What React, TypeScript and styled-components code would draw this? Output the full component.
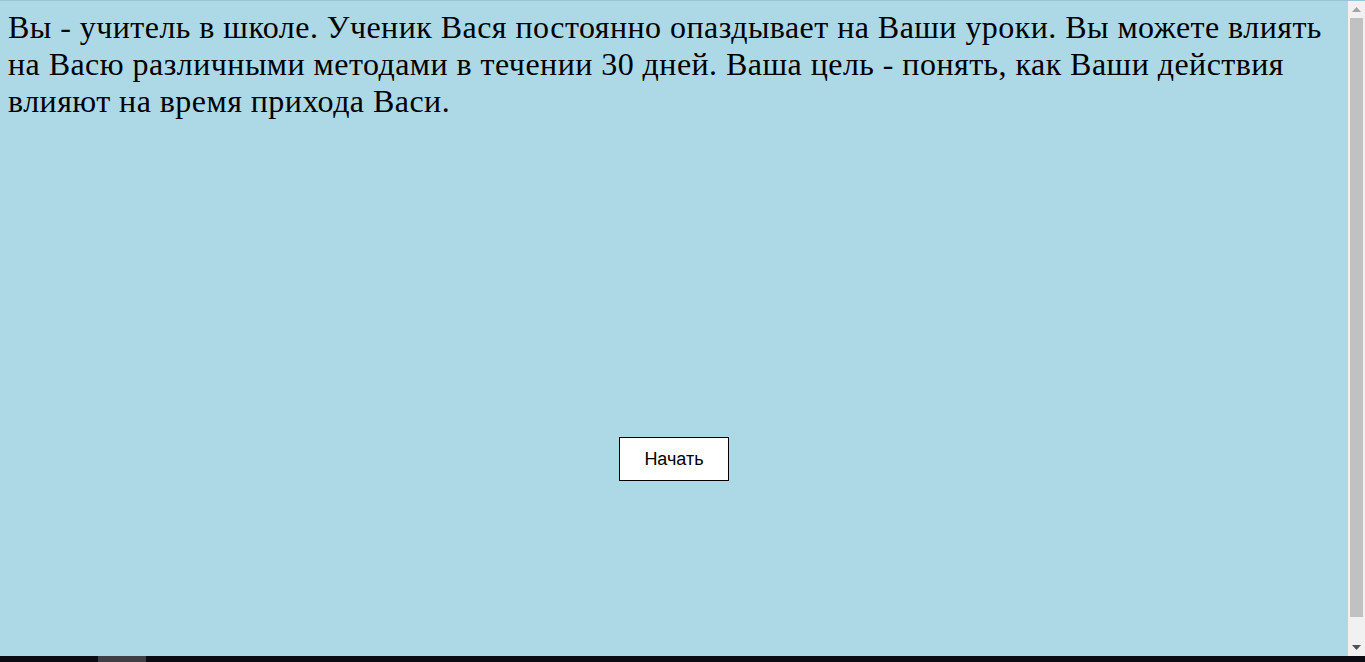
import styled, { createGlobalStyle } from 'styled-components';

const GlobalStyle = createGlobalStyle`
  html, body {
    margin: 0;
    padding: 0;
    height: 100%;
    overflow: hidden;
  }
  #root {
    height: 100%;
  }
`;

const Screen = styled.div`
  height: 100%;
  display: flex;
  flex-direction: column;
  background: #0b0b14;
`;

const Window = styled.div`
  flex: 1;
  display: flex;
  min-height: 0;
  border-top: 1px solid #9cc6d6;
`;

const Page = styled.main`
  flex: 1;
  background-color: lightblue;
  padding: 8px 8px 8px;
  display: flex;
  flex-direction: column;
`;

const Intro = styled.div`
  font-family: "Liberation Serif", "Times New Roman", serif;
  font-size: 32px;
  letter-spacing: 0.45px;
  line-height: 37px;
  color: #000;
`;

const StartButton = styled.button`
  align-self: center;
  margin-top: 317px;
  width: 110px;
  height: 44px;
  background: #fff;
  border: 1px solid #000;
  font-family: "Liberation Sans", Arial, sans-serif;
  font-size: 18px;
  color: #000;
  cursor: pointer;
`;

const ScrollBar = styled.div`
  width: 17px;
  background: #f1f1f1;
  display: flex;
  flex-direction: column;
  align-items: center;
`;

const Arrow = styled.div`
  height: 17px;
  width: 17px;
  display: flex;
  align-items: center;
  justify-content: center;
`;

const Thumb = styled.div`
  width: 13px;
  margin: 0 2px 22px;
  flex: 1;
  background: #c1c1c1;
`;

const TaskBar = styled.div`
  height: 6px;
  display: flex;
  background: #0b0b14;
`;

const TaskItem = styled.div`
  margin-left: 98px;
  width: 48px;
  background: #3e3e44;
`;

export default function App() {
  return (
    <>
      <GlobalStyle />
      <Screen>
        <Window>
          <Page>
            <Intro>
              Вы - учитель в школе. Ученик Вася постоянно опаздывает на Ваши уроки. Вы можете влиять
              на Васю различными методами в течении 30 дней. Ваша цель - понять, как Ваши действия
              влияют на время прихода Васи.
            </Intro>
            <StartButton>Начать</StartButton>
          </Page>
          <ScrollBar>
            <Arrow>
              <svg width="9" height="5" viewBox="0 0 9 5">
                <path d="M0 5 L4.5 0 L9 5 Z" fill="#a3a3a3" />
              </svg>
            </Arrow>
            <Thumb />
            <Arrow>
              <svg width="9" height="5" viewBox="0 0 9 5">
                <path d="M0 0 L9 0 L4.5 5 Z" fill="#505050" />
              </svg>
            </Arrow>
          </ScrollBar>
        </Window>
        <TaskBar>
          <TaskItem />
        </TaskBar>
      </Screen>
    </>
  );
}
